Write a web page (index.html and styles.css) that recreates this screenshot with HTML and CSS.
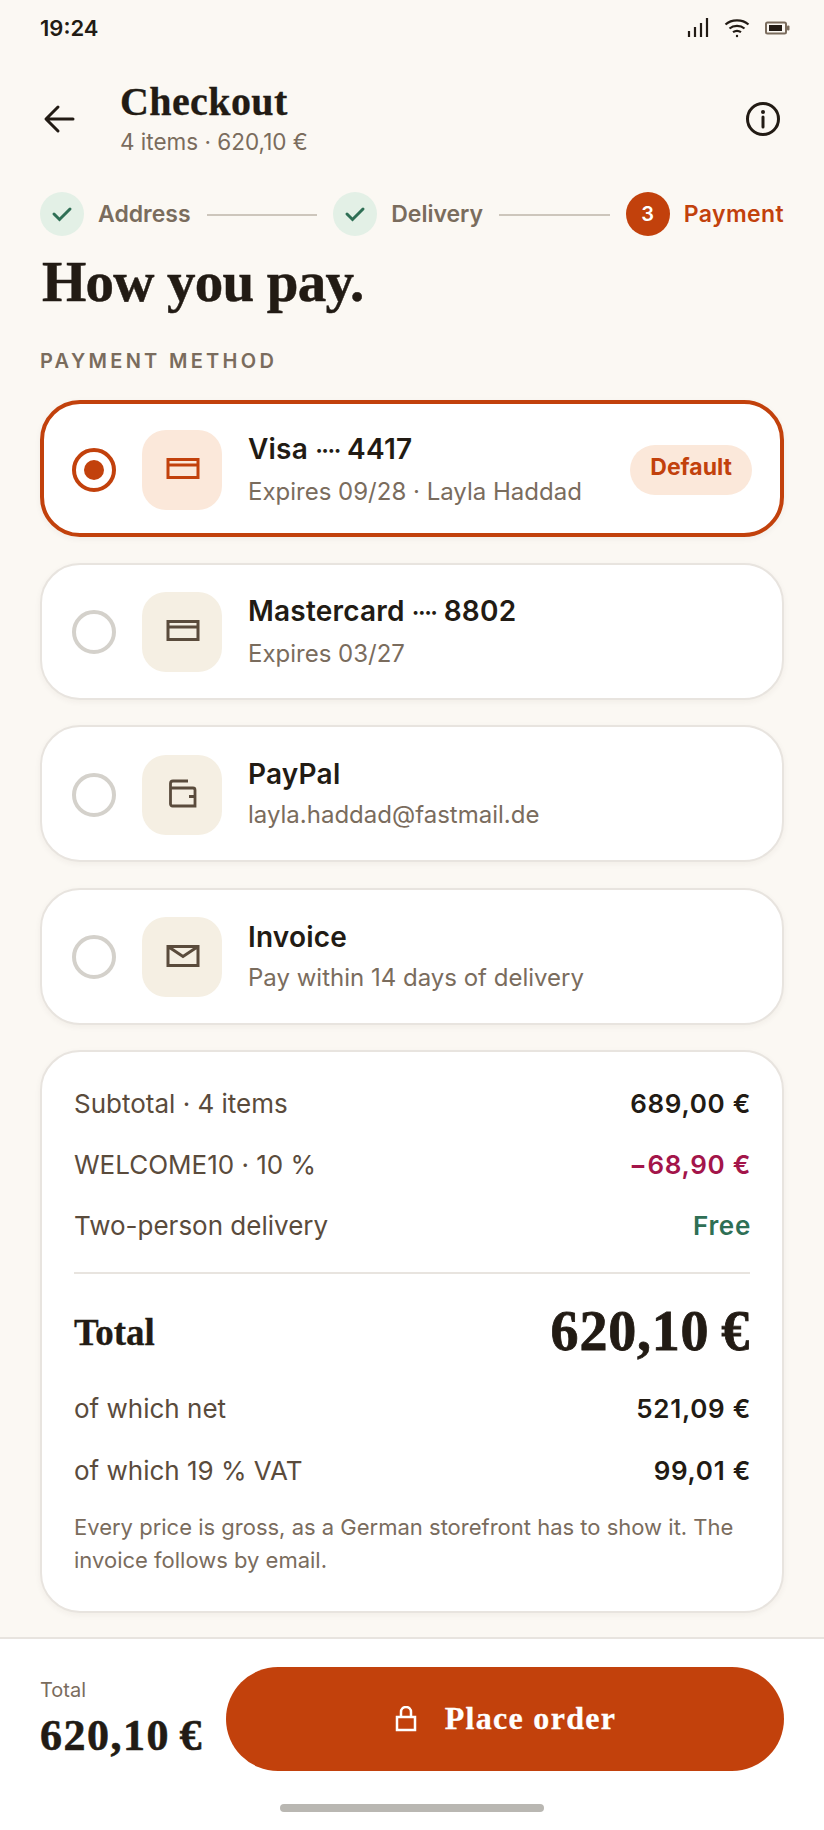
FILE: index.html
```html
<!DOCTYPE html>
<html lang="en">
<head>
    <meta charset="UTF-8">
    <meta name="viewport" content="width=device-width, initial-scale=1.0">
    <title>Checkout</title>
    <link rel="stylesheet" href="styles.css">
</head>
<body>
    <div class="status-bar">
        <span class="time">19:24</span>
        <div class="status-icons">
            <svg width="22" height="20" viewBox="0 0 22 20"><path d="M2 13v6M8 9v10M14 5v14M20 0v19" stroke="#221b14" stroke-width="2.2" fill="none"/></svg>
            <svg width="26" height="20" viewBox="0 0 26 20" fill="none" stroke="#221b14" stroke-width="2.2"><path d="M1.500 6.500C7.500 1 18.500 1 24.500 6.500"/><path d="M5.500 10.500C9.500 7 16.500 7 20.500 10.500"/><path d="M9 14.200C11.500 12.500 14.500 12.500 17 14.200"/><circle cx="13" cy="18" r="1.200" fill="#221b14" stroke="none"/></svg>
            <svg width="25" height="14" viewBox="0 0 25 14"><rect x="1" y="1.500" width="20" height="11" rx="1.500" fill="none" stroke="#7a6c5d" stroke-width="2"/><rect x="4" y="4" width="13" height="6" fill="#221b14"/><rect x="22" y="4.500" width="2.500" height="5" rx="1" fill="#7a6c5d"/></svg>
        </div>
    </div>

    <header class="top-bar">
        <svg class="back" width="32" height="32" viewBox="0 0 32 32" fill="none" stroke="#221b14" stroke-width="3" stroke-linecap="round" stroke-linejoin="round"><path d="M30 16H4M15 4 3 16l12 12"/></svg>
        <div class="top-title">
            <h1>Checkout</h1>
            <p>4 items · 620,10 €</p>
        </div>
        <svg class="info" width="36" height="36" viewBox="0 0 36 36" fill="none" stroke="#221b14" stroke-width="3"><circle cx="18" cy="18" r="15.500"/><path d="M18 16v10" stroke-linecap="round"/><circle cx="18" cy="11" r="2" fill="#221b14" stroke="none"/></svg>
    </header>

    <div class="stepper">
        <div class="step">
            <span class="step-dot done"><svg width="22" height="16" viewBox="0 0 22 16" fill="none" stroke="#2f6f55" stroke-width="3" stroke-linecap="round"><path d="M3 8l5.500 5.500L19 3"/></svg></span>
            <span class="step-label">Address</span>
        </div>
        <span class="step-line"></span>
        <div class="step">
            <span class="step-dot done"><svg width="22" height="16" viewBox="0 0 22 16" fill="none" stroke="#2f6f55" stroke-width="3" stroke-linecap="round"><path d="M3 8l5.500 5.500L19 3"/></svg></span>
            <span class="step-label">Delivery</span>
        </div>
        <span class="step-line"></span>
        <div class="step current">
            <span class="step-dot">3</span>
            <span class="step-label">Payment</span>
        </div>
    </div>

    <h2 class="headline">How you pay.</h2>
    <div class="section-label">PAYMENT METHOD</div>

    <section class="methods">
        <div class="method selected">
            <span class="radio"></span>
            <span class="method-icon"><svg width="40" height="40" viewBox="0 0 40 40" fill="none" stroke="#c2410c" stroke-width="3"><path d="M6 9.500h30v18H6zM6 15h30"/></svg></span>
            <div class="method-text">
                <h3>Visa <span class="dots">····</span> 4417</h3>
                <p>Expires 09/28 · Layla Haddad</p>
            </div>
            <span class="pill">Default</span>
        </div>
        <div class="method">
            <span class="radio"></span>
            <span class="method-icon"><svg width="40" height="40" viewBox="0 0 40 40" fill="none" stroke="#5a4b3c" stroke-width="3"><path d="M6 9.500h30v18H6zM6 15h30"/></svg></span>
            <div class="method-text">
                <h3>Mastercard <span class="dots">····</span> 8802</h3>
                <p>Expires 03/27</p>
            </div>
        </div>
        <div class="method">
            <span class="radio"></span>
            <span class="method-icon"><svg width="40" height="40" viewBox="0 0 40 40" fill="none" stroke="#5a4b3c" stroke-width="2.800"><path d="M8.500 14V8.500a2.500 2.500 0 0 1 2.500-2.500H26M8.500 13H31a2 2 0 0 1 2 2v16H10.500a2 2 0 0 1-2-2V13M27 21.500h6"/></svg></span>
            <div class="method-text">
                <h3>PayPal</h3>
                <p>layla.haddad@fastmail.de</p>
            </div>
        </div>
        <div class="method">
            <span class="radio"></span>
            <span class="method-icon"><svg width="40" height="40" viewBox="0 0 40 40" fill="none" stroke="#5a4b3c" stroke-width="3"><path d="M6 9.500h30v19H6zM6 9.500l15 10 15-10"/></svg></span>
            <div class="method-text">
                <h3>Invoice</h3>
                <p>Pay within 14 days of delivery</p>
            </div>
        </div>
    </section>

    <section class="summary">
        <div class="row"><span>Subtotal · 4 items</span><b>689,00 €</b></div>
        <div class="row"><span>WELCOME10 · 10 %</span><b class="minus">−68,90 €</b></div>
        <div class="row"><span>Two-person delivery</span><b class="free">Free</b></div>
        <div class="divider"></div>
        <div class="total-row"><span>Total</span><strong>620,10 €</strong></div>
        <div class="row tax"><span>of which net</span><b>521,09 €</b></div>
        <div class="row tax"><span>of which 19 % VAT</span><b>99,01 €</b></div>
        <p class="note">Every price is gross, as a German storefront has to show it. The invoice follows by email.</p>
    </section>

    <footer class="order-bar">
        <div class="order-main">
            <div class="order-total">
                <span>Total</span>
                <strong>620,10 €</strong>
            </div>
            <button class="order-btn">
                <svg width="24" height="26" viewBox="0 0 24 26" fill="none" stroke="#fff" stroke-width="2.500"><path d="M3 11h18v13H3zM7 11V6a5 5 0 0 1 10 0v5"/></svg>
                Place order
            </button>
        </div>
        <div class="home-bar"></div>
    </footer>
</body>
</html>
```

FILE: styles.css
```css
* {
    margin: 0;
    padding: 0;
    box-sizing: border-box;
}

body {
    width: 824px;
    height: 1830px;
    background: #fbf8f3;
    color: #221b14;
    font-family: 'Inter', 'Liberation Sans', sans-serif;
    display: flex;
    flex-direction: column;
    overflow: hidden;
}

.status-bar {
    height: 56px;
    padding: 0 34px 0 40px;
    display: flex;
    justify-content: space-between;
    align-items: center;
}

.time {
    font-size: 22px;
    font-weight: 600;
}

.status-icons {
    display: flex;
    align-items: center;
    gap: 15px;
}

.top-bar {
    height: 76px;
    margin-top: 25px;
    padding: 0 43px 0 43px;
    display: flex;
    align-items: center;
}

.top-title {
    flex: 1;
    margin-left: 45px;
}

.top-title h1 {
    font-family: 'Liberation Serif', serif;
    font-size: 40px;
    font-weight: 700;
    line-height: 42px;
    letter-spacing: 0.4px;
    -webkit-text-stroke: 0.3px #221b14;
}

.top-title p {
    margin-top: 4px;
    font-size: 22.500px;
    line-height: 30px;
    color: #7a6c5d;
}

.stepper {
    margin-top: 35px;
    padding: 0 40px;
    display: flex;
    align-items: center;
}

.step {
    display: flex;
    align-items: center;
    gap: 14px;
}

.step-dot {
    width: 44px;
    height: 44px;
    border-radius: 50%;
    display: flex;
    align-items: center;
    justify-content: center;
    background: #c2410c;
    color: #fff;
    font-size: 20px;
    font-weight: 600;
}

.step-dot.done {
    background: #e3f0e6;
}

.step-label {
    font-size: 23px;
    font-weight: 600;
    color: #7a6c5d;
}

.step.current .step-label {
    color: #c2410c;
    letter-spacing: 0.4px;
}

.step-line {
    flex: 1;
    height: 2px;
    margin: 2px 16px 0;
    background: #cdc6bc;
}

.headline {
    margin: 13px 0 0 42px;
    font-family: 'Liberation Serif', serif;
    font-size: 57px;
    font-weight: 700;
    line-height: 66px;
    letter-spacing: -0.8px;
    -webkit-text-stroke: 0.5px #221b14;
}

.section-label {
    margin: 34px 0 0 40px;
    font-size: 20px;
    font-weight: 600;
    line-height: 24px;
    letter-spacing: 3.3px;
    color: #7a6c5d;
}

.methods {
    margin-top: 27px;
    padding: 0 40px;
    display: flex;
    flex-direction: column;
    gap: 25.500px;
}

.method {
    height: 137px;
    padding: 2px 30px 0;
    display: flex;
    align-items: center;
    background: #fff;
    border: 2px solid #e8e4df;
    border-radius: 40px;
    box-shadow: 0 2px 6px rgba(60, 40, 20, 0.05);
}

.method.selected {
    border: 4px solid #c2410c;
    padding: 3px 28px 0;
}

.radio {
    width: 44px;
    height: 44px;
    flex-shrink: 0;
    border: 4px solid #d4d1cb;
    border-radius: 50%;
}

.selected .radio {
    border-color: #c2410c;
    position: relative;
}

.selected .radio::after {
    content: "";
    position: absolute;
    top: 8px;
    left: 8px;
    width: 20px;
    height: 20px;
    border-radius: 50%;
    background: #c2410c;
}

.method-icon {
    width: 80px;
    height: 80px;
    margin-left: 26px;
    flex-shrink: 0;
    display: flex;
    align-items: center;
    justify-content: center;
    background: #f5efe3;
    border-radius: 24px;
}

.selected .method-icon {
    background: #fbe8da;
}

.method-text {
    flex: 1;
    margin: -3px 0 0 26px;
}

.method-text h3 {
    font-size: 28px;
    font-weight: 600;
    line-height: 36px;
    letter-spacing: 0.2px;
}

.dots {
    font-size: 24px;
    letter-spacing: -1.5px;
}

.method-text p {
    margin-top: 8px;
    font-size: 24px;
    line-height: 30px;
    color: #7a6c5d;
}

.pill {
    margin-top: -1px;
    padding: 0 20px;
    height: 50px;
    line-height: 44px;
    background: #fbe8da;
    border-radius: 25px;
    color: #c2410c;
    font-size: 23px;
    font-weight: 700;
}

.summary {
    margin: 25px 40px 0;
    padding: 21px 32px 0;
    height: 563px;
    background: #fff;
    border: 2px solid #e8e4df;
    border-radius: 40px;
    box-shadow: 0 2px 6px rgba(60, 40, 20, 0.05);
}

.row {
    height: 61px;
    display: flex;
    justify-content: space-between;
    align-items: center;
    font-size: 26px;
    color: #5a4b3c;
}

.row b {
    font-weight: 600;
    letter-spacing: 0.7px;
    margin-right: -1px;
    color: #221b14;
}

.row b.minus {
    color: #a3154a;
}

.row b.free {
    color: #2f6f55;
}

.divider {
    height: 2px;
    margin-top: 16px;
    background: #e8e4df;
}

.total-row {
    height: 104px;
    padding-top: 14px;
    display: flex;
    justify-content: space-between;
    align-items: center;
    font-family: 'Liberation Serif', serif;
    font-weight: 700;
}

.total-row span {
    font-size: 37px;
    -webkit-text-stroke: 0.3px #221b14;
}

.total-row strong {
    margin-top: -4px;
    font-size: 56px;
    letter-spacing: 0.8px;
    word-spacing: -3px;
    -webkit-text-stroke: 0.8px #221b14;
}

.row.tax {
    height: 62px;
}

.note {
    margin-top: 9px;
    font-size: 22px;
    line-height: 33px;
    color: #7a6c5d;
}

.order-bar {
    margin-top: 24px;
    flex: 1;
    background: #fff;
    border-top: 2px solid #e8e4df;
    padding: 28px 40px 0;
}

.order-main {
    display: flex;
    align-items: center;
    justify-content: space-between;
}

.order-total {
    display: flex;
    flex-direction: column;
}

.order-total span {
    font-size: 20px;
    line-height: 26px;
    margin-top: -1px;
    color: #7a6c5d;
}

.order-total strong {
    margin-top: 9px;
    font-family: 'Liberation Serif', serif;
    font-size: 44px;
    line-height: 48px;
    letter-spacing: 1.500px;
    word-spacing: -3px;
    -webkit-text-stroke: 0.6px #221b14;
}

.order-btn {
    width: 558px;
    height: 104px;
    display: flex;
    align-items: center;
    justify-content: center;
    gap: 27px;
    background: #c2410c;
    color: #fff;
    border: none;
    border-radius: 52px;
    font-family: 'Liberation Serif', serif;
    font-size: 32px;
    font-weight: 700;
    letter-spacing: 1.300px;
    -webkit-text-stroke: 0.3px #fff;
}

.home-bar {
    width: 264px;
    height: 8px;
    margin: 33px auto 0;
    background: #b9b7b2;
    border-radius: 4px;
}
```
